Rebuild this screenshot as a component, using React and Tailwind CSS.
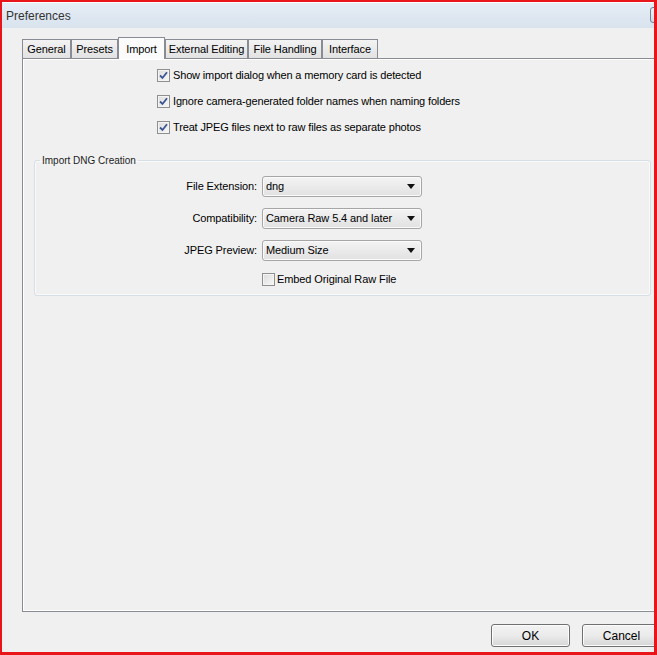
import React from "react";

const font = { fontFamily: '"Liberation Sans", Arial, sans-serif' };

function Check({ checked }) {
  return (
    <span className="relative inline-flex h-[13px] w-[13px] shrink-0 items-center justify-center border border-[#8f8f8f] bg-gradient-to-br from-[#dcdcdc] to-[#f8f8f8] shadow-[inset_0_0_0_1px_#f4f4f4]">
      {checked && (
        <svg width="9" height="9" viewBox="0 0 9 9">
          <path d="M1 4.5 L3.5 7 L8 1.2" fill="none" stroke="#3b5694" strokeWidth="1.8" />
        </svg>
      )}
    </span>
  );
}

function Tab({ label, w, active }) {
  if (active) {
    return (
      <div
        className={`relative z-10 -mb-px flex h-[22px] items-start justify-center whitespace-nowrap border border-b-0 border-[#898c95] bg-[#fbfbfb] pt-[3px] text-[11px] tracking-[-0.1px] text-black ${w}`}
      >
        {label}
      </div>
    );
  }
  return (
    <div
      className={`flex h-[19px] items-center justify-center whitespace-nowrap border border-b-0 border-[#898c95] bg-gradient-to-b from-[#f3f3f3] to-[#e2e2e2] text-[11px] tracking-[-0.1px] text-black ${w}`}
    >
      {label}
    </div>
  );
}

function Select({ value }) {
  return (
    <div className="flex h-[21px] w-[160px] items-center justify-between rounded-[3px] border border-[#a6a6a6] bg-gradient-to-b from-[#f4f4f4] to-[#e1e1e1] pl-[3px] pr-[6px] text-[11px] tracking-[-0.1px] text-black shadow-[inset_0_0_0_1px_#fafafa]">
      <span>{value}</span>
      <svg width="8" height="5" viewBox="0 0 8 5">
        <path d="M0 0 H8 L4 5 Z" fill="#111" />
      </svg>
    </div>
  );
}

function Row({ label, value }) {
  return (
    <div className="flex items-center">
      <div className="w-[227px] pr-[5px] text-right text-[11px] tracking-[-0.1px] text-black">{label}</div>
      <Select value={value} />
    </div>
  );
}

function Button({ children }) {
  return (
    <div className="flex h-[23px] w-[79px] shrink-0 items-center justify-center rounded-[3px] border border-[#707070] bg-gradient-to-b from-[#f2f2f2] via-[#ebebeb] to-[#d6d6d6] text-[12px] text-black shadow-[inset_0_0_0_1px_#fcfcfc]">
      {children}
    </div>
  );
}

export default function App() {
  return (
    <div
      style={font}
      className="flex h-[655px] w-[657px] flex-col overflow-hidden border-b-[3px] border-l-2 border-r-[3px] border-t-2 border-[#e8161b] bg-[#f0f0f0]"
    >
      <div className="relative flex h-[26px] shrink-0 items-center border-t border-white bg-gradient-to-b from-[#e6edf5] to-[#d8e3ee] pl-[4px] text-[12px] text-[#333]">
        Preferences
        <div className="absolute right-[-12px] top-[4px] h-[16px] w-[16px] rounded-[3px] border border-[#6f7f95] bg-gradient-to-b from-[#eef3f8] to-[#cfdbe8]" />
      </div>
      <div className="flex flex-1 flex-col pl-[20px] pt-[9px]">
        <div className="flex h-[21px] items-end">
          <Tab label="General" w="w-[49px]" />
          <Tab label="Presets" w="w-[47px]" />
          <Tab label="Import" w="w-[47px]" active />
          <Tab label="External Editing" w="w-[83px]" />
          <Tab label="File Handling" w="w-[74px]" />
          <Tab label="Interface" w="w-[56px]" />
        </div>
        <div className="h-[554px] w-[660px] shrink-0 border border-[#898c95] bg-[#f0f0f0] pl-[11px] pt-[10px] shadow-[inset_1px_1px_0_#fff,inset_-1px_-1px_0_#fff]">
          <div className="flex flex-col gap-[13px] pl-[123px]">
            {[
              "Show import dialog when a memory card is detected",
              "Ignore camera-generated folder names when naming folders",
              "Treat JPEG files next to raw files as separate photos",
            ].map((t) => (
              <label key={t} className="flex h-[13px] items-center gap-[3px] text-[11px] tracking-[-0.15px] text-black">
                <Check checked />
                <span>{t}</span>
              </label>
            ))}
          </div>
          <fieldset className="mt-[20px] h-[142px] w-[617px] rounded-[3px] border border-[#d5dfe5] px-0 pb-0 pt-[9px] shadow-[inset_0_0_0_1px_#fafafa]">
            <legend className="ml-[5px] px-[2px] text-[10px] leading-[13px] text-[#222]">Import DNG Creation</legend>
            <div className="flex flex-col gap-[11px]">
              <Row label="File Extension:" value="dng" />
              <Row label="Compatibility:" value="Camera Raw 5.4 and later" />
              <Row label="JPEG Preview:" value="Medium Size" />
              <label className="mt-px flex h-[13px] items-center gap-[2px] pl-[227px] text-[11px] tracking-[-0.1px] text-black">
                <Check />
                <span>Embed Original Raw File</span>
              </label>
            </div>
          </fieldset>
        </div>
        <div className="mt-[12px] flex gap-[12px] pl-[469px]">
          <Button>OK</Button>
          <Button>Cancel</Button>
        </div>
      </div>
    </div>
  );
}
